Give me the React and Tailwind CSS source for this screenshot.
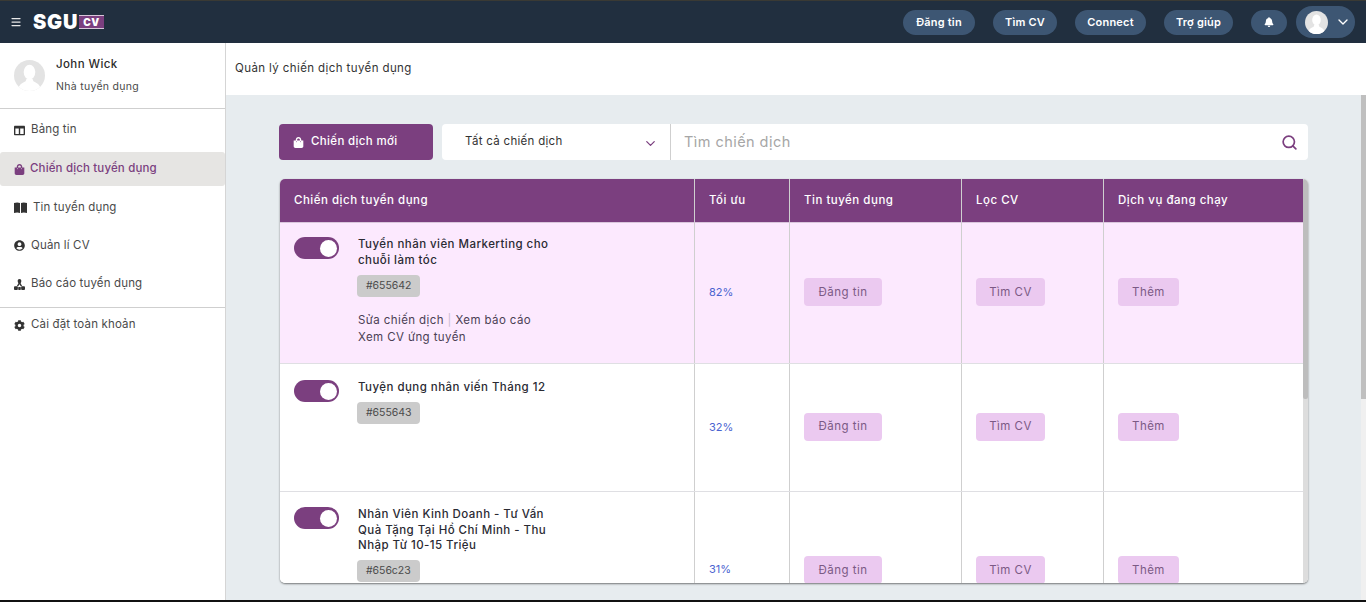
import React from 'react';
import { ChevronDown, Menu, Search } from 'lucide-react';
import { FaBell, FaCog, FaColumns, FaShoppingBag, FaUserCircle } from 'react-icons/fa';

const font = { fontFamily: 'Inter, "Noto Sans", sans-serif' };

const Avatar = ({ className }) => (
    <svg viewBox="0 0 32 32" className={className}>
        <circle cx="16" cy="16" r="16" fill="#e3e3e3" />
        <clipPath id="av"><circle cx="16" cy="16" r="16" /></clipPath>
        <g clipPath="url(#av)" fill="#ffffff">
            <ellipse cx="16" cy="12.5" rx="6" ry="7.5" />
            <path d="M13 19 L19 19 L20 22 C24 24 27 25 28 32 L4 32 C5 25 8 24 12 22 Z" />
        </g>
    </svg>
);

const BookIcon = () => (
    <svg viewBox="0 0 13 11" className="w-[13px] h-[11px]" fill="#333333">
        <path d="M0 1 C2 0.3 4.5 0.3 6 1 L6 11 C4.5 10.3 2 10.3 0 11 Z" />
        <path d="M7 1 C8.5 0.3 11 0.3 13 1 L13 11 C11 10.3 8.5 10.3 7 11 Z" />
    </svg>
);

const ReportIcon = () => (
    <svg viewBox="0 0 12 12" className="w-[11px] h-[11px]" fill="#333333">
        <path d="M6 0 C7.3 0 8 1 8 2.2 C8 3.2 7.6 4 7.2 4.5 L9 8 L7.4 8 L6 5.6 L4.6 8 L3 8 L4.8 4.5 C4.4 4 4 3.2 4 2.2 C4 1 4.7 0 6 0 Z" />
        <rect x="0" y="8" width="4.2" height="4" rx="1" />
        <rect x="7.8" y="8" width="4.2" height="4" rx="1" />
        <rect x="4.6" y="8.6" width="2.8" height="3.4" rx="0.8" />
    </svg>
);

const NavPill = ({ children, className }) => (
    <button className={`h-[25px] rounded-full bg-[#3d5673] text-white text-[11px] font-semibold tracking-[0.2px] flex items-center justify-center ${className}`}>
        {children}
    </button>
);

const SideItem = ({ icon, label, active, className }) => (
    <div className={`flex items-center gap-[6px] pl-[14px] text-[11.5px] tracking-[0.15px] ${active ? 'bg-[#e6e5e3] rounded-[3px] text-[#7b3f7f] font-medium' : 'text-[#4a4a4a]'} ${className}`}>
        {icon}
        <span>{label}</span>
    </div>
);

const Toggle = ({ className }) => (
    <div className={`w-[45px] h-[22px] rounded-full bg-[#7b3f7f] flex items-center justify-end pr-[2px] shrink-0 ${className}`}>
        <div className="w-[17px] h-[17px] rounded-full bg-white" />
    </div>
);

const ActionBtn = ({ children, className }) => (
    <button className={`h-[28px] pt-[1px] rounded-[4px] bg-[#ebc9f0] text-[#7b5a85] text-[11.5px] tracking-[0.45px] flex items-center justify-center ${className}`}>
        {children}
    </button>
);

const Row = ({ title, tag, links, pct, heightClass, rowClass, border, toggleClass, titleClass, tagClass, cellClass, pctClass }) => (
    <div className={`grid grid-cols-[415px_95px_172px_142px_1fr] ${heightClass} ${rowClass} ${border ? 'border-b border-[#dfdfe3]' : ''}`}>
        <div className="flex gap-[19px] pl-[14px] pt-[15px] border-r border-[#cfcfcf]">
            <Toggle className={toggleClass} />
            <div className="w-[200px]">
                <div className={`text-[11.5px] leading-[15.6px] font-medium tracking-[0.45px] text-[#2a2a33] ${titleClass}`}>{title}</div>
                <div className={`-ml-[1px] w-fit h-[22px] px-[9px] rounded-[4px] bg-[#cbcbcb] text-[#4a4a4a] text-[10.5px] tracking-[-0.05px] flex items-center ${tagClass}`}>{tag}</div>
                {links && (
                    <div className="mt-[15px] text-[11.5px] leading-[17px] tracking-[0.4px] text-[#4b3f55]">
                        <div>Sửa chiến dịch <span className="text-[#cbbcd0]">|</span> Xem báo cáo</div>
                        <div>Xem CV ứng tuyển</div>
                    </div>
                )}
            </div>
        </div>
        <div className={`flex items-center pl-[14px] border-r border-[#cfcfcf] text-[11px] text-[#4a63d0] ${pctClass}`}>{pct}</div>
        <div className={`flex items-center pl-[14px] border-r border-[#cfcfcf] ${cellClass}`}><ActionBtn className="w-[78px]">Đăng tin</ActionBtn></div>
        <div className={`flex items-center pl-[14px] border-r border-[#cfcfcf] ${cellClass}`}><ActionBtn className="w-[69px]">Tìm CV</ActionBtn></div>
        <div className={`flex items-center pl-[14px] ${cellClass}`}><ActionBtn className="w-[61px]">Thêm</ActionBtn></div>
    </div>
);

const App = () => {
    return (
        <div className="w-[1366px] h-[602px] flex flex-col overflow-hidden bg-[#e7ecef]" style={font}>
            {/* Top bar */}
            <header className="h-[43px] shrink-0 bg-[#212f3f] border-t border-[#3a3a34] flex items-center justify-between pl-[10px] pr-[11px]">
                <div className="flex items-center gap-[11px]">
                    <Menu size={12} strokeWidth={2.5} className="text-[#e8e8e8]" />
                    <div className="flex items-center">
                        <span className="w-[46px] text-white text-[20px] font-black leading-none tracking-[0.8px]">SGU</span>
                        <span className="h-[14px] w-[25px] bg-[#7b3f7f] border-y border-[#d8c6da] text-white text-[10px] font-black tracking-[0.5px] flex items-center justify-center">CV</span>
                    </div>
                </div>
                <div className="flex items-center">
                    <NavPill className="w-[72px]">Đăng tin</NavPill>
                    <NavPill className="w-[64px] ml-[18px]">Tìm CV</NavPill>
                    <NavPill className="w-[71px] ml-[18px]">Connect</NavPill>
                    <NavPill className="w-[69px] ml-[18px]">Trợ giúp</NavPill>
                    <NavPill className="w-[36px] ml-[18px]"><FaBell size={10} /></NavPill>
                    <div className="w-[59px] h-[32px] ml-[9px] rounded-full bg-[#3d5673] flex items-center pl-[9px] gap-[7px]">
                        <Avatar className="w-[23px] h-[23px]" />
                        <ChevronDown size={16} className="text-white" />
                    </div>
                </div>
            </header>

            <div className="flex-1 flex min-h-0">
                {/* Sidebar */}
                <aside className="w-[226px] shrink-0 bg-white border-r border-[#d5d5d5]">
                    <div className="h-[66px] flex items-center pl-[14px] gap-[11px] border-b border-[#cfcfcf]">
                        <Avatar className="w-[31px] h-[31px]" />
                        <div className="-mt-[1px]">
                            <div className="text-[11.5px] font-medium tracking-[0.4px] text-[#2b2b2b]">John Wick</div>
                            <div className="mt-[6px] text-[10.5px] tracking-[0.3px] text-[#4a4a4a]">Nhà tuyển dụng</div>
                        </div>
                    </div>
                    <SideItem className="h-[41px] pt-[1px]" icon={<FaColumns size={11} className="text-[#333]" />} label="Bảng tin" />
                    <SideItem active className="h-[34px] mt-[2px] !gap-[5px]" icon={<FaShoppingBag size={11} />} label="Chiến dịch tuyển dụng" />
                    <SideItem className="h-[39px] mt-[2px]" icon={<BookIcon />} label="Tin tuyển dụng" />
                    <SideItem className="h-[37px]" icon={<FaUserCircle size={11} className="text-[#333]" />} label="Quản lí CV" />
                    <SideItem className="h-[44px] pb-[3px] border-b border-[#cfcfcf]" icon={<ReportIcon />} label="Báo cáo tuyển dụng" />
                    <SideItem className="h-[32px] pt-[2px]" icon={<FaCog size={11} className="text-[#333]" />} label="Cài đặt toàn khoản" />
                </aside>

                <div className="flex-1 min-w-0 flex flex-col">
                    <div className="h-[52px] shrink-0 bg-white flex items-center pl-[9px] text-[11.5px] tracking-[0.4px] text-[#333]">
                        Quản lý chiến dịch tuyển dụng
                    </div>

                    <div className="flex-1 min-h-0 flex">
                        <main className="flex-1 min-w-0 pl-[53px] pt-[29px]">
                            {/* Toolbar */}
                            <div className="flex h-[36px] w-[1029px]">
                                <button className="w-[154px] rounded-[4px] bg-[#7b3f7f] text-white text-[11.5px] font-medium tracking-[0.35px] flex items-center pl-[14px] gap-[7px]">
                                    <FaShoppingBag size={11} />
                                    Chiến dịch mới
                                </button>
                                <div className="ml-[9px] flex-1 rounded-[4px] bg-white flex items-center">
                                    <div className="w-[229px] h-full flex items-center justify-between pl-[23px] pr-[12px] border-r border-[#cfcfcf] text-[11.5px] tracking-[0.3px] text-[#333]">
                                        Tất cả chiến dịch
                                        <ChevronDown size={15} className="text-[#7b3f7f] mt-[3px]" />
                                    </div>
                                    <div className="flex-1 flex items-center justify-between pl-[13px] pr-[10px] text-[14.5px] tracking-[0.45px] text-[#a6a6a6]">
                                        Tìm chiến dịch
                                        <Search size={17} strokeWidth={2.4} className="text-[#7b3f7f]" />
                                    </div>
                                </div>
                            </div>

                            {/* Table */}
                            <div className="mt-[19px] ml-[1px] w-[1028px] h-[404px] rounded-[5px] bg-white shadow-[0_1px_2px_rgba(0,0,0,0.5)] overflow-hidden flex">
                                <div className="w-[1023px] shrink-0">
                                    <div className="grid grid-cols-[415px_95px_172px_142px_1fr] h-[44px] bg-[#7b3f7f] border-b border-[#d9c6dc] text-white text-[11.5px] font-medium tracking-[0.5px]">
                                        <div className="flex items-center pl-[14px] border-r border-[#cfcfcf]">Chiến dịch tuyển dụng</div>
                                        <div className="flex items-center pl-[14px] border-r border-[#cfcfcf]">Tối ưu</div>
                                        <div className="flex items-center pl-[14px] border-r border-[#cfcfcf]">Tin tuyển dụng</div>
                                        <div className="flex items-center pl-[14px] border-r border-[#cfcfcf]">Lọc CV</div>
                                        <div className="flex items-center pl-[14px]">Dịch vụ đang chạy</div>
                                    </div>
                                    <Row border rowClass="bg-[#fce9fe]" heightClass="h-[141px]" toggleClass="-mt-[1px]" titleClass="-mt-[1px]" tagClass="mt-[7px]" cellClass="pb-[2px]" pctClass="pb-[2px]" title="Tuyển nhân viên Markerting cho chuỗi làm tóc" tag="#655642" links pct="82%" />
                                    <Row border rowClass="bg-white" heightClass="h-[128px]" toggleClass="mt-[1px]" titleClass="mt-[1px]" tagClass="mt-[6px]" cellClass="pb-[2px]" title="Tuyện dụng nhân viến Tháng 12" tag="#655643" pct="32%" />
                                    <Row rowClass="bg-white" heightClass="h-[156px]" titleClass="" tagClass="mt-[6px]" pctClass="pb-[2px]" title="Nhân Viên Kinh Doanh - Tư Vấn Quà Tặng Tại Hồ Chí Minh - Thu Nhập Từ 10-15 Triệu" tag="#656c23" pct="31%" />
                                </div>
                                {/* Table scrollbar */}
                                <div className="flex-1 bg-[#dddddd]">
                                    <div className="h-[220px] bg-[#bdbdbd] rounded-[2px]" />
                                </div>
                            </div>
                        </main>
                        {/* Page scrollbar */}
                        <div className="w-[5px] shrink-0 bg-[#f0f0f0]">
                            <div className="h-[304px] bg-[#bfbfbf]" />
                        </div>
                    </div>
                </div>
            </div>
            <div className="h-[2px] shrink-0 bg-[#111]" />
        </div>
    );
};

export default App;
